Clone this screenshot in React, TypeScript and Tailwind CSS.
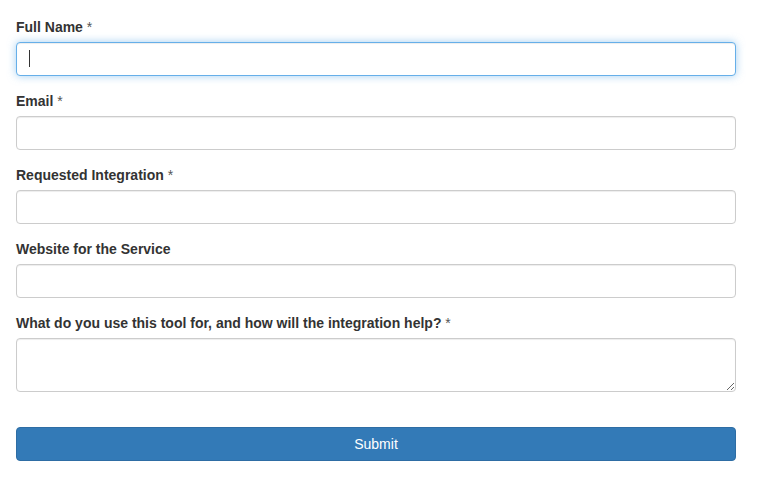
import React from "react";

const inputCls =
  "block w-full h-[34px] px-[12px] py-[6px] text-[14px] leading-[20px] text-[#555] bg-white border border-[#ccc] rounded-[4px] shadow-[inset_0_1px_1px_rgba(0,0,0,0.075)] outline-none";

function Label({ children, req }: { children: React.ReactNode; req?: boolean }) {
  return (
    <label className="block mb-[5px] text-[14px] leading-[20px] font-bold text-[#333]">
      {children}
      {req ? <span className="font-normal text-[#555]"> *</span> : null}
    </label>
  );
}

export default function App() {
  return (
    <div
      className="bg-white min-h-[481px] px-[16px] pt-[17px] text-[#333]"
      style={{ fontFamily: '"Liberation Sans", Arial, Helvetica, sans-serif' }}
    >
      <form className="w-[720px]" onSubmit={(e) => e.preventDefault()}>
        <div className="mb-[15px]">
          <Label req>Full Name</Label>
          <div className="relative">
            <input
              type="text"
              className="block w-full h-[34px] px-[12px] py-[6px] text-[14px] leading-[20px] text-[#555] bg-white border border-[#66afe9] rounded-[4px] outline-none shadow-[inset_0_1px_1px_rgba(0,0,0,0.075),0_0_8px_rgba(102,175,233,0.6)]"
            />
            <span className="absolute left-[13px] top-[8px] w-px h-[17px] bg-[#333]" />
          </div>
        </div>
        <div className="mb-[15px]">
          <Label req>Email</Label>
          <input type="email" className={inputCls} />
        </div>
        <div className="mb-[15px]">
          <Label req>Requested Integration</Label>
          <input type="text" className={inputCls} />
        </div>
        <div className="mb-[15px]">
          <Label>Website for the Service</Label>
          <input type="text" className={inputCls} />
        </div>
        <div className="mb-[35px]">
          <Label req>What do you use this tool for, and how will the integration help?</Label>
          <textarea
            rows={2}
            className="block w-full h-[54px] px-[12px] py-[6px] text-[14px] leading-[20px] text-[#555] bg-white border border-[#ccc] rounded-[4px] shadow-[inset_0_1px_1px_rgba(0,0,0,0.075)] outline-none"
          />
        </div>
        <button
          type="submit"
          className="block w-full h-[34px] text-[14px] leading-[20px] text-white bg-[#337ab7] border border-[#2e6da4] rounded-[4px]"
        >
          Submit
        </button>
      </form>
    </div>
  );
}
